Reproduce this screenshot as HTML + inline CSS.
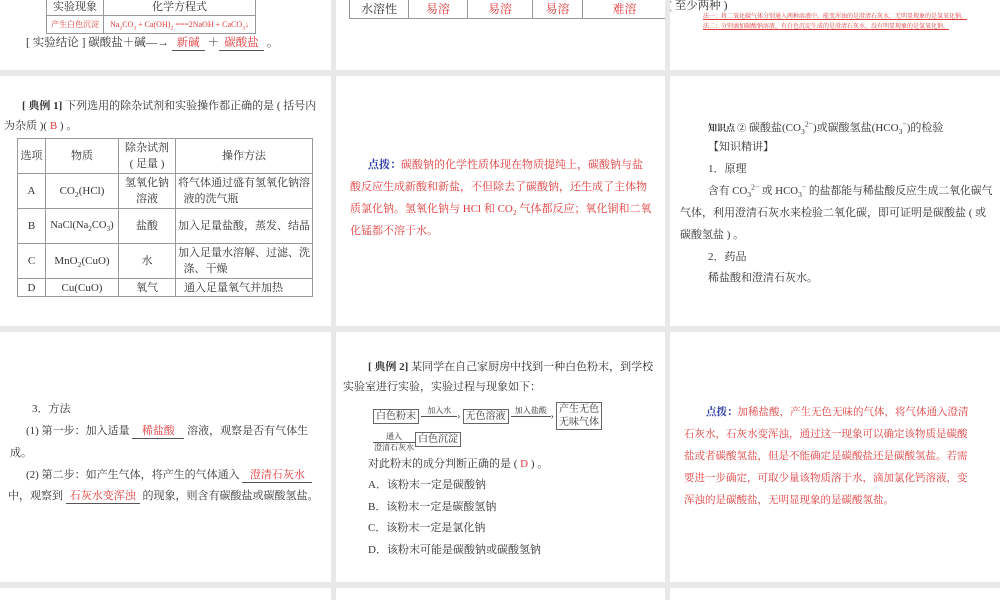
<!DOCTYPE html>
<html><head><meta charset="utf-8"><style>
body{margin:0;width:1000px;height:600px;background:#e8e8e8;position:relative;overflow:hidden;font-family:"Liberation Serif","Noto Serif CJK SC","Noto Sans CJK SC",serif;color:#333;font-size:11.5px}
.p{position:absolute;background:#fff;overflow:hidden}
.t{position:absolute;white-space:nowrap;line-height:16px}
sub,sup{line-height:0;font-size:70%}
.r{color:#e03a3a}
.b{color:#2a3aa8;font-weight:bold}
.u{border-bottom:1px solid #555;display:inline-block;text-align:center;line-height:14px}
table{border-collapse:collapse;position:absolute;table-layout:fixed}
td{border:1px solid #999;padding:0;text-align:center;line-height:16px;white-space:nowrap;overflow:hidden}
.bx{border:1px solid #666;padding:0 2px;font-size:10px;display:inline-block;line-height:13px}
</style></head><body>
<!-- row1 -->
<div class="p" style="left:0;top:0;width:331px;height:70px">
<table style="left:46px;top:-2px;font-size:11px;width:210px">
<tr><td style="width:56px">实验现象</td><td>化学方程式</td></tr>
<tr style="height:18px"><td class="r" style="font-size:8px">产生白色沉淀</td><td class="r" style="font-size:8px">Na<sub>2</sub>CO<sub>3</sub> + Ca(OH)<sub>2</sub> ===2NaOH + CaCO<sub>3</sub>↓</td></tr>
</table>
<div class="t" style="left:26px;top:35px">[ 实验结论 ] 碳酸盐＋碱—→ <span class="u r" style="width:33px">新碱</span> ＋<span class="u r" style="width:45px">碳酸盐</span> 。</div>
</div>
<div class="p" style="left:336px;top:0;width:329px;height:70px">
<table style="left:13px;top:-2px;font-size:12px;width:318px">
<tr style="height:20px"><td style="width:58px;color:#333">水溶性</td><td class="r" style="width:58px">易溶</td><td class="r" style="width:64px">易溶</td><td class="r" style="width:49px">易溶</td><td class="r">难溶</td></tr>
</table>
</div>
<div class="p" style="left:670px;top:0;width:330px;height:70px">
<div class="t" style="left:-2px;top:-2px">( 至少两种 )</div>
<div class="t r" style="left:33px;top:12px;font-size:6px;line-height:10px;text-decoration:underline">法一：将二氧化碳气体分别通入两种溶液中，能变浑浊的是澄清石灰水，无明显现象的是氢氧化钠。<br>法二：分别滴加碳酸钠溶液，有白色沉淀生成的是澄清石灰水，没有明显现象的是氢氧化钠。</div>
</div>
<!-- row2 -->
<div class="p" style="left:0;top:76px;width:331px;height:250px">
<div class="t" style="left:22px;top:22px;font-size:11px"><b>[ 典例 1]</b> 下列选用的除杂试剂和实验操作都正确的是 ( 括号内</div>
<div class="t" style="left:4px;top:42px;font-size:11px">为杂质 )( <span class="r">B</span> ) 。</div>
<table style="left:17px;top:62px;font-size:11px;width:296px">
<tr style="height:35px"><td style="width:27px">选项</td><td style="width:72px">物质</td><td style="width:56px">除杂试剂<br>( 足量 )</td><td>操作方法</td></tr>
<tr style="height:35px"><td>A</td><td>CO<sub>2</sub>(HCl)</td><td>氢氧化钠<br>溶液</td><td style="text-align:left;padding-left:2px">将气体通过盛有氢氧化钠溶<br>&nbsp;&nbsp;液的洗气瓶</td></tr>
<tr style="height:35px"><td>B</td><td style="font-size:10.5px">NaCl(Na<sub>2</sub>CO<sub>3</sub>)</td><td>盐酸</td><td style="text-align:left;padding-left:2px">加入足量盐酸，蒸发、结晶</td></tr>
<tr style="height:35px"><td>C</td><td>MnO<sub>2</sub>(CuO)</td><td>水</td><td style="text-align:left;padding-left:2px">加入足量水溶解、过滤、洗<br>&nbsp;&nbsp;涤、干燥</td></tr>
<tr style="height:18px"><td>D</td><td>Cu(CuO)</td><td>氧气</td><td style="text-align:left;padding-left:8px">通入足量氧气并加热</td></tr>
</table>
</div>
<div class="p" style="left:336px;top:76px;width:329px;height:250px">
<div class="t r" style="left:32px;top:78px;line-height:22px;font-size:11px"><span class="b">点拨：</span>碳酸钠的化学性质体现在物质提纯上，碳酸钠与盐<br><span style="margin-left:-18px">酸反应生成新酸和新盐，不但除去了碳酸钠，还生成了主体物</span><br><span style="margin-left:-18px">质氯化钠。氢氧化钠与 HCl 和 CO<sub>2</sub> 气体都反应；氧化铜和二氧</span><br><span style="margin-left:-18px">化锰都不溶于水。</span></div>
</div>
<div class="p" style="left:670px;top:76px;width:330px;height:250px">
<div class="t" style="left:38px;top:44px;font-size:11px"><b style="font-size:9px">知识点 ②</b> 碳酸盐(CO<sub>3</sub><sup>2−</sup>)或碳酸氢盐(HCO<sub>3</sub><sup>−</sup>)的检验</div>
<div class="t" style="left:38px;top:63px;font-size:11px">【知识精讲】</div>
<div class="t" style="left:38px;top:85px;font-size:11px">1．原理</div>
<div class="t" style="left:38px;top:107px;font-size:10.8px">含有 CO<sub>3</sub><sup>2−</sup> 或 HCO<sub>3</sub><sup>−</sup> 的盐都能与稀盐酸反应生成二氧化碳气</div>
<div class="t" style="left:10px;top:129px;font-size:11px">气体，利用澄清石灰水来检验二氧化碳，即可证明是碳酸盐 ( 或</div>
<div class="t" style="left:10px;top:151px;font-size:11px">碳酸氢盐 ) 。</div>
<div class="t" style="left:38px;top:173px;font-size:11px">2．药品</div>
<div class="t" style="left:38px;top:194px;font-size:11px">稀盐酸和澄清石灰水。</div>
</div>
<!-- row3 -->
<div class="p" style="left:0;top:332px;width:331px;height:250px">
<div class="t" style="left:32px;top:69px;font-size:11px">3．方法</div>
<div class="t" style="left:26px;top:91px;font-size:11px">(1) 第一步：加入适量 <span class="u r" style="width:52px">稀盐酸</span> 溶液，观察是否有气体生</div>
<div class="t" style="left:10px;top:113px;font-size:11px">成。</div>
<div class="t" style="left:26px;top:135px;font-size:11px">(2) 第二步：如产生气体，将产生的气体通入 <span class="u r" style="width:70px">澄清石灰水</span></div>
<div class="t" style="left:8px;top:156px;font-size:11px">中，观察到 <span class="u r" style="width:74px">石灰水变浑浊</span> 的现象，则含有碳酸盐或碳酸氢盐。</div>
</div>
<div class="p" style="left:336px;top:332px;width:329px;height:250px">
<div class="t" style="left:32px;top:27px;font-size:11px"><b>[ 典例 2]</b> 某同学在自己家厨房中找到一种白色粉末，到学校</div>
<div class="t" style="left:7px;top:47px;font-size:11px">实验室进行实验，实验过程与现象如下：</div>
<div class="t" style="left:37px;top:70px;font-size:9px"><span class="bx">白色粉末</span> <span style="display:inline-block;width:36px;border-bottom:1px solid #555;text-align:center;line-height:10px;font-size:8px;vertical-align:6px">加入水</span>› <span class="bx">无色溶液</span> <span style="display:inline-block;width:40px;border-bottom:1px solid #555;text-align:center;line-height:10px;font-size:8px;vertical-align:6px">加入盐酸</span>› <span class="bx" style="vertical-align:-6px">产生无色<br>无味气体</span></div>
<div class="t" style="left:37px;top:100px;font-size:8px;line-height:10px"><span style="display:inline-block;text-align:center;width:42px">通入<br><span style="border-top:1px solid #555;display:block">澄清石灰水</span></span><span class="bx" style="vertical-align:8px">白色沉淀</span></div>
<div class="t" style="left:32px;top:124px;font-size:11px">对此粉末的成分判断正确的是 ( <span class="r">D</span> ) 。</div>
<div class="t" style="left:32px;top:145px;font-size:11px">A．该粉末一定是碳酸钠</div>
<div class="t" style="left:32px;top:167px;font-size:11px">B．该粉末一定是碳酸氢钠</div>
<div class="t" style="left:32px;top:188px;font-size:11px">C．该粉末一定是氯化钠</div>
<div class="t" style="left:32px;top:210px;font-size:11px">D．该粉末可能是碳酸钠或碳酸氢钠</div>
</div>
<div class="p" style="left:670px;top:332px;width:330px;height:250px">
<div class="t r" style="left:36px;top:70px;line-height:22px;font-size:10.5px"><span class="b">点拨：</span>加稀盐酸，产生无色无味的气体，将气体通入澄清<br><span style="margin-left:-22px">石灰水，石灰水变浑浊，通过这一现象可以确定该物质是碳酸</span><br><span style="margin-left:-22px">盐或者碳酸氢盐，但是不能确定是碳酸盐还是碳酸氢盐。若需</span><br><span style="margin-left:-22px">要进一步确定，可取少量该物质溶于水，滴加氯化钙溶液，变</span><br><span style="margin-left:-22px">浑浊的是碳酸盐，无明显现象的是碳酸氢盐。</span></div>
</div>
<!-- row4 -->
<div class="p" style="left:0;top:588px;width:331px;height:12px"></div>
<div class="p" style="left:336px;top:588px;width:329px;height:12px"></div>
<div class="p" style="left:670px;top:588px;width:330px;height:12px"></div>
</body></html>
